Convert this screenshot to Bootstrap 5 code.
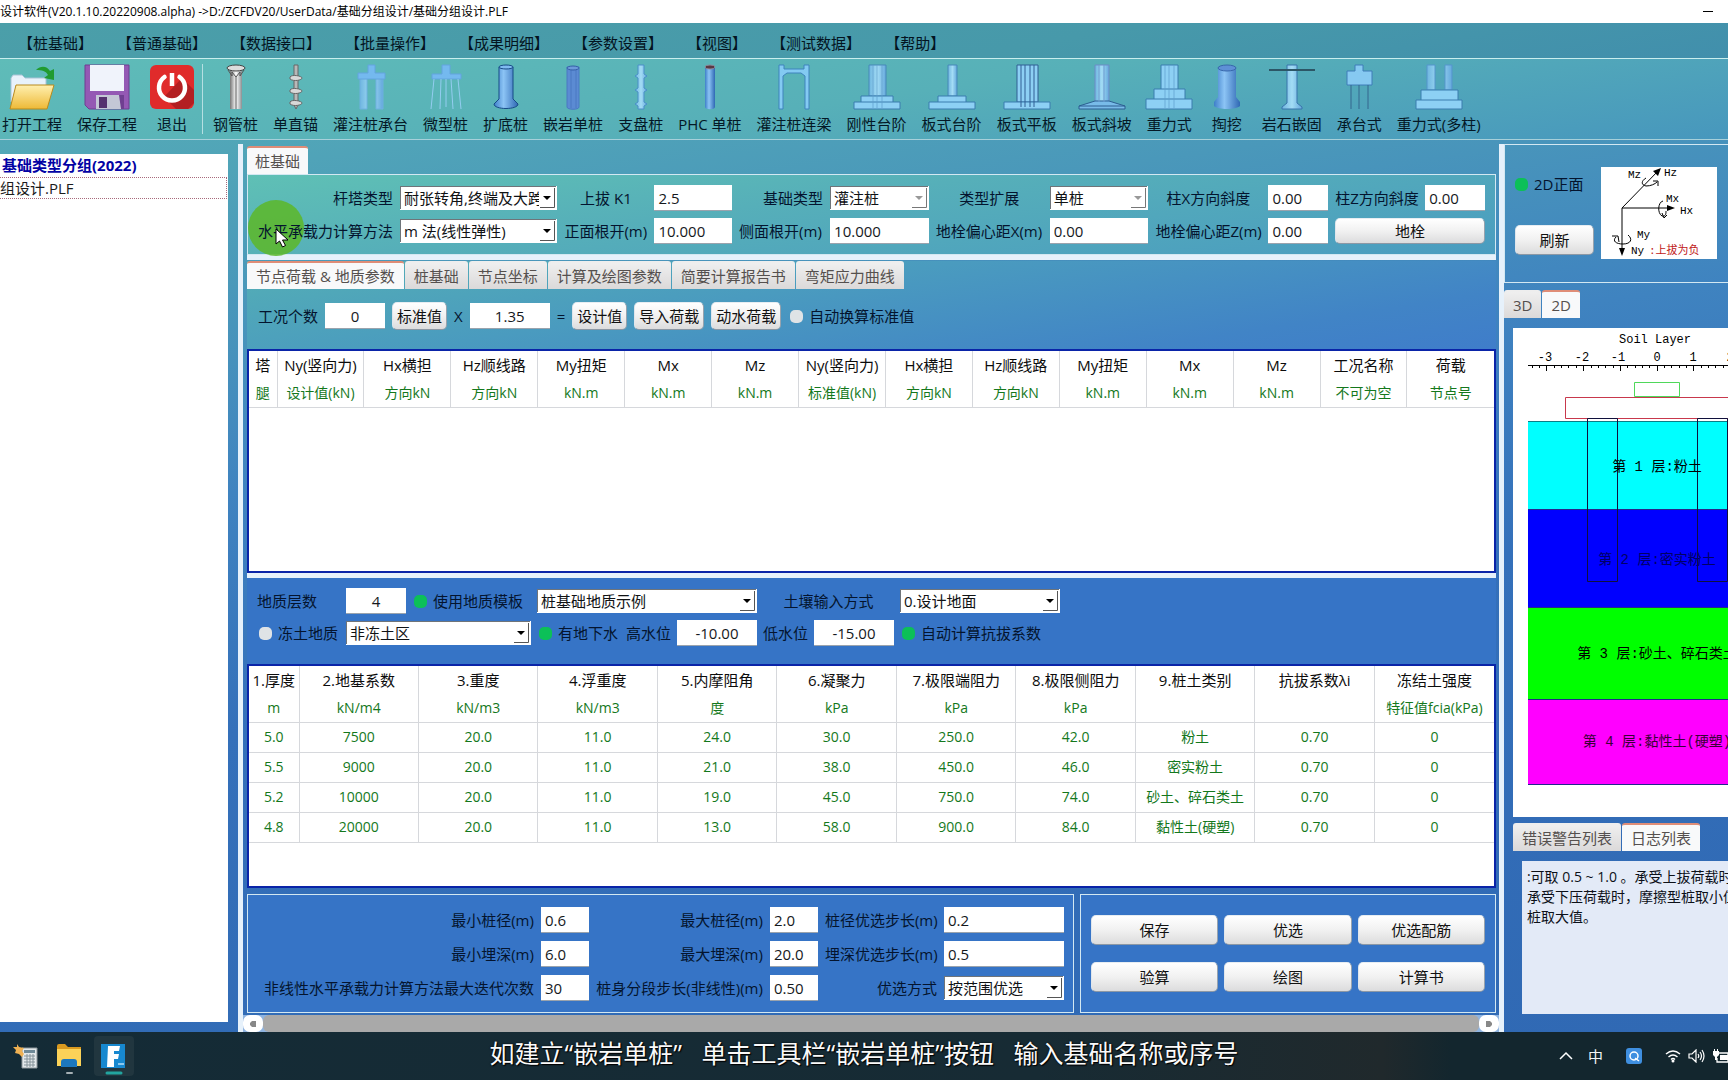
<!DOCTYPE html>
<html lang="zh-CN">
<head>
<meta charset="utf-8">
<meta name="viewport" content="width=device-width, initial-scale=1">
<title>基础分组设计</title>
<link href="https://cdn.jsdelivr.net/npm/bootstrap@5.3.0/dist/css/bootstrap.min.css" rel="stylesheet">
<style>
:root { --ink:#04142e; --line:#d3e8f2; --strip:#e6f1fb; --grid-green:#14781c; }
body { font-family:"Open Sans","Noto Sans CJK SC",sans-serif; font-size:15px; line-height:20px; color:var(--ink); height:100vh; overflow:hidden; }
label { white-space:nowrap; }
.app-title { height:23px; font-size:12px; line-height:23px; color:#000; background:#fff; white-space:nowrap; }
.app-title button { width:20px; height:22px; margin-right:10px; }
.app-menu { height:35px; gap:24px; padding:4px 0 0 18px; background:linear-gradient(170deg,#4b9fa9,#4799aa 60%,#418fac); }
.app-menu a { color:#03141f; text-decoration:none; white-space:nowrap; }
.app-tools { height:82px; padding:5px 0 0 2px; gap:15px; border-top:1px solid #c9eeee; border-bottom:1px solid #a7d0da; background:linear-gradient(172deg,#5fbcb8,#57b0b8 50%,#4797bd); }
.tool { min-width:40px; color:#041826; font-size:15px; line-height:20px; white-space:nowrap; }
.tool svg { width:48px; height:46px; margin:0 -4px 4px; flex:none; }
.tool-sep { width:1px; height:70px; background:#b5dfe2; margin:0 -5px; }
.work { background:linear-gradient(172deg,#53a9b7 0,#4a98ba 16%,#3f83c0 34%,#3470ba 55%,#3069b4 100%); }
.tree { width:238px; padding:14px 10px 10px 0; }
.tree ul { background:#fff; color:#1b1b1b; line-height:22px; }
.tree .root { color:#0202a4; font-weight:700; padding:0 0 1px 2px; }
.tree .leaf { border:1px dotted #a86a7c; border-left:0; margin-right:1px; height:22px; line-height:20px; }
.vsplit { width:5px; margin-top:4px; background:var(--strip); }
.hsplit { height:5px; background:var(--strip); }
.center-body { padding:6px 3px 2px 4px; }
.panel { border:1px solid var(--line); }
.pane-tabs { gap:1px; }
.pane-tabs button { border:0; border-top:2px solid #eee; padding:0 9px; color:#55504e; background:linear-gradient(#efefef,#dbd9d9); border-radius:3px 3px 0 0; height:28px; line-height:24px; white-space:nowrap; }
.pane-tabs button.active { background:#f8f9fa; border-top-color:#df8d77; }
.pane-tabs.flush button { padding:0 8px; }
.pane-tabs.log-tabs { padding-left:9px; }
.params { display:grid; grid-template-columns:135px minmax(0,158fr) 83px minmax(0,78fr) 84px minmax(0,99fr) 107px minmax(0,99fr) 106px minmax(0,60fr) 83px minmax(0,60fr); gap:7px; padding:10px; align-items:center; background:linear-gradient(173deg,#5fc0b5 0,#56afb9 40%,#4a9cc0 100%); }
.params label { position:relative; z-index:1; }
.txt { height:26px; border:0; border-radius:0; padding:0 4px; background:#fff; color:#15181c; width:100%; min-width:0; box-shadow:inset 0 -1px #9aa3ad; }
.sel { height:24px; width:100%; min-width:0; border:0; border-radius:0; padding:0 18px 0 4px; color:#101214; appearance:none; box-shadow:inset -1px -1px #fff, inset 1px 1px #6f7479;
 background:#fff url("data:image/svg+xml,%3Csvg xmlns='http://www.w3.org/2000/svg' width='17' height='22'%3E%3Cpath d='M1 20.5H15.500V1' fill='none' stroke='%23555'/%3E%3Cpath d='M4 9h8l-4 4z' fill='%23000'/%3E%3C/svg%3E") no-repeat right 1px top 1px; }
.sel:disabled { opacity:1; background-image:url("data:image/svg+xml,%3Csvg xmlns='http://www.w3.org/2000/svg' width='17' height='22'%3E%3Cpath d='M1 20.5H15.500V1' fill='none' stroke='%23777'/%3E%3Cpath d='M4 9h8l-4 4z' fill='%23999'/%3E%3C/svg%3E"); }
.w60{width:60px}.w80{width:80px}.w160{width:160px}.w185{width:185px}.w220{width:220px}
.keybtn { border:1px solid; border-color:#e7edf2 #98a3ae #8c98a5 #e0e6ec; border-radius:5px; background:linear-gradient(#fff,#f1f1f1 50%,#dcdcdd); color:#111; padding:0 3px; height:28px; line-height:24px; white-space:nowrap; }
.params .keybtn { grid-column:span 2; height:26px; line-height:22px; }
.chk { appearance:none; width:13px; height:13px; border-radius:5px; background:#dfe3e6; margin:0; flex:none; }
.chk:checked { background:#0cc058; }
.load-pane { padding:13px 0 19px 11px; gap:7px; }
.load-pane .keybtn { padding:0 4px; }
.load-pane .chk { margin:0 -1px 0 2px; }
.load-bg { margin-top:1px; background:linear-gradient(171deg,#54afb5 0,#4a9bbf 40%,#4184c6 80%,#3f7dca 100%); }
.sheet { border:2px solid #0a24a8; background:#fff; min-height:0; overflow:hidden; flex:1 1 222px; }
.sheet table { width:100%; table-layout:fixed; border-collapse:collapse; text-align:center; font-size:14px; color:var(--grid-green); }
.sheet th { font-weight:400; color:#0c0c0c; font-size:15px; height:29px; }
.sheet th, .sheet td { padding:0 0 1px; border-right:1px solid #d6d8dc; white-space:nowrap; overflow:hidden; }
.sheet th:last-child, .sheet td:last-child { border-right:0; }
.sheet thead td { height:27px; border-bottom:1px solid #d6d8dc; }
.sheet tbody td { height:30px; border-bottom:1px solid #d6d8dc; }
.col-leg { width:28px; }
.col-thick { width:50px; }
.geo { padding:10px 0 18px 10px; gap:6px; }
.geo .chk { margin:0 6px 0 8px; }
.geo .chk.first { margin:0 6px 0 2px; }
.lower { background:#3674c6; }
.opts-row { gap:6px; margin-top:6px; }
.opt { display:grid; grid-template-columns:minmax(0,1fr) 48px 167px 48px 112px 120px; column-gap:7px; row-gap:8px; align-items:center; text-align:right; padding:12px 9px 11px 4px; }
.acts { width:416px; display:grid; grid-template-columns:repeat(3,1fr); column-gap:6px; row-gap:16px; padding:20px 10px; }
.acts .keybtn { height:30px; line-height:26px; }
.hbar { height:17px; background:#8fb4e0; }
.hbar button { width:20px; border:0; background:#fff; border-radius:7px; line-height:17px; }
.hbar .thumb { background:#a9a9a9; border-radius:6px; }
.side { width:224px; overflow:hidden; }
.side-top { border:1px solid var(--line); border-width:1px 0 1px 1px; height:139px; margin-top:4px; gap:7px; padding:21px 0 0 10px; }
.side-top .keybtn { width:79px; height:30px; line-height:26px; }
.side-top svg { flex:none; margin-top:1px; background:#fff; }
.view-tabs { margin-top:7px; }
.soil { margin:10px 0 6px 9px; background:#fff; }
.log { background:#e3eaf7; border:0; resize:none; overflow:hidden; font-size:14px; line-height:20px; color:#0c1018; padding:6px 5px; height:153px; width:300px; white-space:pre; margin:10px 0 0 18px; }
.dock { height:48px; background:linear-gradient(90deg,#142b36,#172b34 60%,#20292c 80%,#13262e 84%,#13262e); color:#f4f6f7; }
.dock .app { width:40px; height:40px; flex:none; background:none; }
.dock .app.on { background:#21363f; border-radius:4px; }
.tray { gap:7px; }
.caption { left:0; right:0; top:0; text-align:center; font-size:25px; line-height:42px; white-space:pre; color:#fafafa; text-shadow:0 0 2px #000, 1px 1px 1px #000; }
.hot { left:0; top:25px; width:56px; height:56px; border-radius:50%; background:#5cb72c; opacity:.88; }
.ptr { left:27px; top:53px; z-index:3; }
</style>
</head>
<body class="d-flex flex-column">
<svg width="0" height="0" class="position-absolute" aria-hidden="true">
 <defs>
  <linearGradient id="gb"><stop offset="0" stop-color="#3e7fc9"/><stop offset=".4" stop-color="#8cc4f5"/><stop offset="1" stop-color="#2f68b4"/></linearGradient>
  <linearGradient id="gl"><stop offset="0" stop-color="#6fb6e0"/><stop offset=".5" stop-color="#a3dcf5"/><stop offset="1" stop-color="#64a8dc"/></linearGradient>
  <linearGradient id="gg"><stop offset="0" stop-color="#777"/><stop offset=".5" stop-color="#fff"/><stop offset="1" stop-color="#8a8f92"/></linearGradient>
  <linearGradient id="gy" x2="0" y2="1"><stop offset="0" stop-color="#fff0b0"/><stop offset="1" stop-color="#eeb936"/></linearGradient>
 </defs>
</svg>

<header class="app-title d-flex justify-content-between">
 <span>设计软件(V20.1.10.20220908.alpha) -&gt;D:/ZCFDV20/UserData/基础分组设计/基础分组设计.PLF</span>
 <button class="btn p-0 border-0 lh-1" aria-label="最小化"><svg width="10" height="3"><path d="M0 .5h10" stroke="#000"/></svg></button>
</header>

<nav class="app-menu d-flex align-items-center">
 <a href="#">【桩基础】</a><a href="#">【普通基础】</a><a href="#">【数据接口】</a><a href="#">【批量操作】</a><a href="#">【成果明细】</a><a href="#">【参数设置】</a><a href="#">【视图】</a><a href="#">【测试数据】</a><a href="#">【帮助】</a>
</nav>

<div class="app-tools d-flex" role="toolbar">
 <button class="btn p-0 border-0 tool d-flex flex-column align-items-center"><svg viewBox="0 0 48 46"><path d="M3 14l2-3h9l3 3h21v24H3z" fill="#e8f2fb" stroke="#a9c3d6"/><path d="M8 21h38l-7 24H2z" fill="url(#gy)" stroke="#b98a1d"/><path d="M28 6c5-5 11-4 14 1l4-2v11l-10-2 4-3c-2-4-6-5-12-5z" fill="#219b30"/></svg>打开工程</button>
 <button class="btn p-0 border-0 tool d-flex flex-column align-items-center"><svg viewBox="0 0 48 46"><path d="M2 1h44v44H6l-4-4z" fill="#9459b4" stroke="#6f3f91"/><path d="M7 1h34v26H7z" fill="#f0f3fb"/><path d="M13 31h25v14H13z" fill="#c4c7d6"/><path d="M16 33h8v11h-8z" fill="#55316f"/><path d="M36 31h5v14h-3z" fill="#6f3f91"/></svg>保存工程</button>
 <button class="btn p-0 border-0 tool d-flex flex-column align-items-center"><svg viewBox="0 0 48 46"><rect x="2" y="1" width="44" height="44" rx="6" fill="#e02b2b"/><path d="M34 14l12 12v13l-6 6H28L16 33z" fill="#b31f22"/><path d="M16.500 13a13 13 0 1 0 15 0" fill="none" stroke="#fff" stroke-width="4.500" stroke-linecap="round"/><path d="M24 9v13" stroke="#fff" stroke-width="4.500"/></svg>退出</button>
 <span class="tool-sep"></span>
 <button class="btn p-0 border-0 tool d-flex flex-column align-items-center"><svg viewBox="0 0 48 46"><path d="M18 6h12v39H18z" fill="url(#gg)"/><ellipse cx="24" cy="4" rx="9" ry="3" fill="#ddd" stroke="#444"/><path d="M16 6l4 6v-4l4 5 4-5v4l4-6M24 13v32" fill="none" stroke="#555"/></svg>钢管桩</button>
 <button class="btn p-0 border-0 tool d-flex flex-column align-items-center"><svg viewBox="0 0 48 46"><path d="M22 1h4v40l-2 4-2-4z" fill="#b8b8b8" stroke="#666"/><path d="M18 13c2-3 12-1 12 1s-8 4-12 1zM18 26c2-3 12-1 12 1s-8 4-12 1zM18 38c2-3 12-1 12 1s-8 4-12 1z" fill="#d8d8d8" stroke="#666"/></svg>单直锚</button>
 <button class="btn p-0 border-0 tool d-flex flex-column align-items-center"><svg viewBox="0 0 48 46"><path d="M13 14h7v31h-7zM29 14h7v31h-7z" fill="url(#gl)" stroke="#6fb0e0"/><path d="M21 1h7v8h10v6H11V9h10z" fill="#74b9ef" stroke="#62a4de"/></svg>灌注桩承台</button>
 <button class="btn p-0 border-0 tool d-flex flex-column align-items-center"><svg viewBox="0 0 48 46"><path d="M20 1h8v9h11v5H10v-5h10z" fill="#74b9ef" stroke="#62a4de"/><path d="M12 15L9 45M19 15l-1 30M24 15v28M29 15l2 30M36 15l3 30" stroke="#93cdf0"/></svg>微型桩</button>
 <button class="btn p-0 border-0 tool d-flex flex-column align-items-center"><svg viewBox="0 0 48 46"><path d="M17 3h14v32l5 5c0 6-24 6-24 0l5-5z" fill="url(#gb)" stroke="#174a86"/><ellipse cx="24" cy="3" rx="7" ry="2" fill="#7fbaf0" stroke="#174a86"/></svg>扩底桩</button>
 <button class="btn p-0 border-0 tool d-flex flex-column align-items-center"><svg viewBox="0 0 48 46"><path d="M18 3h12v40c0 3-12 3-12 0z" fill="#5b8bd3" stroke="#4a78c2"/><path d="M22 5v39M27 5v39" stroke="#4a78c2"/><ellipse cx="24" cy="4" rx="6" ry="2" fill="#6c9ada" stroke="#345fa6"/></svg>嵌岩单桩</button>
 <button class="btn p-0 border-0 tool d-flex flex-column align-items-center"><svg viewBox="0 0 48 46"><path d="M21 1h6v9l3 2-3 2v10l3 2-3 2v10l3 2-3 2v3h-6v-3l-3-2 3-2V28l-3-2 3-2V14l-3-2 3-2z" fill="url(#gl)" stroke="#4a8fc8"/></svg>支盘桩</button>
 <button class="btn p-0 border-0 tool d-flex flex-column align-items-center"><svg viewBox="0 0 48 46"><path d="M19 3h10v40c0 3-10 3-10 0z" fill="url(#gb)"/><ellipse cx="24" cy="3" rx="5" ry="2" fill="#5a3844" stroke="#8a8a9a"/></svg>PHC 单桩</button>
 <button class="btn p-0 border-0 tool d-flex flex-column align-items-center"><svg viewBox="0 0 48 46"><path d="M9 1h5v4h20V1h5v44h-4V12l-4-3H17l-4 3v33H9z" fill="#83caf2" stroke="#3f83bd"/></svg>灌注桩连梁</button>
 <button class="btn p-0 border-0 tool d-flex flex-column align-items-center"><svg viewBox="0 0 48 46"><path d="M16 1h17v31H16z" fill="url(#gl)" stroke="#4788b8"/><path d="M8 32h32v6h7v7H1v-7h7zM8 38h32" fill="#8dd0f4" stroke="#3a7cae"/><path d="M20 1v43M24 1v43M29 1v43" stroke="#5f9fcb" stroke-width=".7"/></svg>刚性台阶</button>
 <button class="btn p-0 border-0 tool d-flex flex-column align-items-center"><svg viewBox="0 0 48 46"><path d="M20 1h9v31h-9z" fill="url(#gl)" stroke="#4788b8"/><path d="M10 32h28v6h9v7H1v-7h9zM10 38h28" fill="#8dd0f4" stroke="#3a7cae"/></svg>板式台阶</button>
 <button class="btn p-0 border-0 tool d-flex flex-column align-items-center"><svg viewBox="0 0 48 46"><path d="M14 1h21v37H14z" fill="#8dd0f4" stroke="#315f94"/><path d="M1 38h46v7H1z" fill="#8dd0f4" stroke="#3a7cae"/><path d="M18 1v42M22 1v42M27 1v42M31 1v42" stroke="#315f94"/></svg>板式平板</button>
 <button class="btn p-0 border-0 tool d-flex flex-column align-items-center"><svg viewBox="0 0 48 46"><path d="M17 1h14v37H17z" fill="url(#gl)" stroke="#6c8cc6"/><path d="M17 37h14l16 5v3H1v-3zM1 42h46" fill="#78bbe8" stroke="#2c5f91"/><path d="M21 1v37M26 1v37" stroke="#6c9bcf"/></svg>板式斜坡</button>
 <button class="btn p-0 border-0 tool d-flex flex-column align-items-center"><svg viewBox="0 0 48 46"><path d="M16 1h17v24h7v10h7v10H1V35h8V25h7zM9 35h31M16 25h17" fill="#8dd0f4" stroke="#3a7cae"/><path d="M20 1v43M24 1v43M29 1v43" stroke="#5f9fcb" stroke-width=".7"/></svg>重力式</button>
 <button class="btn p-0 border-0 tool d-flex flex-column align-items-center"><svg viewBox="0 0 48 46"><path d="M15 4h18v29l4 5v4c-4 4-22 4-26 0v-4l4-5z" fill="url(#gb)"/><ellipse cx="24" cy="4" rx="9" ry="3" fill="#5e90d6" stroke="#3767ab"/></svg>掏挖</button>
 <button class="btn p-0 border-0 tool d-flex flex-column align-items-center"><svg viewBox="0 0 48 46"><path d="M19 1h10v38l5 4v2H14v-2l5-4z" fill="url(#gl)" stroke="#3974ab"/><path d="M1 6h46" stroke="#2c5666" stroke-width="2"/></svg>岩石嵌固</button>
 <button class="btn p-0 border-0 tool d-flex flex-column align-items-center"><svg viewBox="0 0 48 46"><path d="M20 1h8v6h9v14H12V7h8z" fill="#86c9f1" stroke="#3f7cb8"/><path d="M16 21v24M24 21v24M33 21v24" stroke="#34678e"/></svg>承台式</button>
 <button class="btn p-0 border-0 tool d-flex flex-column align-items-center"><svg viewBox="0 0 48 46"><path d="M12 1h8v25h-8zM30 1h7v25h-7z" fill="url(#gl)" stroke="#5595cc"/><path d="M6 26h37v10h4v9H1v-9h5zM6 36h37" fill="#8dd0f4" stroke="#3a7cae"/></svg>重力式(多柱)</button>
</div>

<main class="work d-flex flex-grow-1 overflow-hidden">
 <aside class="tree d-flex flex-shrink-0">
  <ul class="list-unstyled m-0 flex-grow-1"><li class="root">基础类型分组(2022)</li><li class="leaf">组设计.PLF</li></ul>
 </aside>
 <div class="vsplit flex-shrink-0"></div>

 <section class="d-flex flex-column flex-grow-1 overflow-hidden">
  <div class="center-body d-flex flex-column flex-grow-1">
   <div class="pane-tabs flush d-flex"><button class="active">桩基础</button></div>
   <div class="params panel position-relative">
    <span class="hot position-absolute"></span>
    <svg class="ptr position-absolute" width="14" height="20" viewBox="0 0 14 20"><path d="M1 1v15l3.500-3 3 6 3-1.500-3-5.500H13z" fill="#fff" stroke="#000"/></svg>
    <label class="text-end" for="p1">杆塔类型</label><select class="sel" id="p1"><option>耐张转角,终端及大跨越</option></select>
    <label class="text-center" for="p2">上拔 K1</label><input class="txt" id="p2" value="2.5">
    <label class="text-end" for="p3">基础类型</label><select class="sel" id="p3" disabled><option>灌注桩</option></select>
    <label class="text-center" for="p4">类型扩展</label><select class="sel" id="p4" disabled><option>单桩</option></select>
    <label class="text-center" for="p5">柱X方向斜度</label><input class="txt" id="p5" value="0.00">
    <label for="p6">柱Z方向斜度</label><input class="txt" id="p6" value="0.00">
    <label class="text-end" for="p7">水平承载力计算方法</label><select class="sel" id="p7"><option>m 法(线性弹性)</option></select>
    <label for="p8">正面根开(m)</label><input class="txt" id="p8" value="10.000">
    <label for="p9">侧面根开(m)</label><input class="txt" id="p9" value="10.000">
    <label for="p10">地栓偏心距X(m)</label><input class="txt" id="p10" value="0.00">
    <label for="p11">地栓偏心距Z(m)</label><input class="txt" id="p11" value="0.00">
    <button class="keybtn">地栓</button>
   </div>
   <div class="hsplit"></div>

   <div class="load-bg">
    <div class="pane-tabs d-flex"><button class="active">节点荷载 &amp; 地质参数</button><button>桩基础</button><button>节点坐标</button><button>计算及绘图参数</button><button>简要计算报告书</button><button>弯矩应力曲线</button></div>
    <div class="load-pane d-flex align-items-center">
     <label for="n1">工况个数</label><input class="txt w60 text-center" id="n1" value="0">
     <button class="keybtn">标准值</button><span>X</span><input class="txt w80 text-center" aria-label="分项系数" value="1.35"><span>=</span>
     <button class="keybtn">设计值</button><button class="keybtn">导入荷载</button><button class="keybtn">动水荷载</button>
     <input class="chk" type="checkbox" id="c1"><label for="c1">自动换算标准值</label>
    </div>
   </div>

   <div class="sheet">
    <table>
     <colgroup><col class="col-leg"><col span="14"></colgroup>
     <thead>
      <tr><th>塔</th><th>Ny(竖向力)</th><th>Hx横担</th><th>Hz顺线路</th><th>My扭矩</th><th>Mx</th><th>Mz</th><th>Ny(竖向力)</th><th>Hx横担</th><th>Hz顺线路</th><th>My扭矩</th><th>Mx</th><th>Mz</th><th>工况名称</th><th>荷载</th></tr>
      <tr><td>腿</td><td>设计值(kN)</td><td>方向kN</td><td>方向kN</td><td>kN.m</td><td>kN.m</td><td>kN.m</td><td>标准值(kN)</td><td>方向kN</td><td>方向kN</td><td>kN.m</td><td>kN.m</td><td>kN.m</td><td>不可为空</td><td>节点号</td></tr>
     </thead>
    </table>
   </div>
   <div class="hsplit"></div>

   <div class="lower geo d-flex flex-column">
    <div class="d-flex align-items-center">
     <label for="g1" style="width:89px">地质层数</label><input class="txt w60 text-center" id="g1" value="4">
     <input class="chk" type="checkbox" id="g2" checked><label for="g2" style="width:104px">使用地质模板</label>
     <select class="sel w220" aria-label="地质模板"><option>桩基础地质示例</option></select>
     <label for="g3" class="text-center" style="width:143px">土壤输入方式</label><select class="sel w160" id="g3"><option>0.设计地面</option></select>
    </div>
    <div class="d-flex align-items-center">
     <input class="chk first" type="checkbox" id="g4"><label for="g4" style="width:68px">冻土地质</label>
     <select class="sel w185" aria-label="冻土分区"><option>非冻土区</option></select>
     <input class="chk" type="checkbox" id="g5" checked><label for="g5" style="width:68px">有地下水</label>
     <label for="g6" style="width:51px">高水位</label><input class="txt w80 text-center" id="g6" value="-10.00">
     <label for="g7" class="text-center" style="width:57px">低水位</label><input class="txt w80 text-center" id="g7" value="-15.00">
     <input class="chk" type="checkbox" id="g8" checked><label for="g8">自动计算抗拔系数</label>
    </div>
   </div>

   <div class="sheet">
    <table>
     <colgroup><col class="col-thick"><col span="10"></colgroup>
     <thead>
      <tr><th>1.厚度</th><th>2.地基系数</th><th>3.重度</th><th>4.浮重度</th><th>5.内摩阻角</th><th>6.凝聚力</th><th>7.极限端阻力</th><th>8.极限侧阻力</th><th>9.桩土类别</th><th>抗拔系数λi</th><th>冻结土强度</th></tr>
      <tr><td>m</td><td>kN/m4</td><td>kN/m3</td><td>kN/m3</td><td>度</td><td>kPa</td><td>kPa</td><td>kPa</td><td></td><td></td><td>特征值fcia(kPa)</td></tr>
     </thead>
     <tbody>
      <tr><td>5.0</td><td>7500</td><td>20.0</td><td>11.0</td><td>24.0</td><td>30.0</td><td>250.0</td><td>42.0</td><td>粉土</td><td>0.70</td><td>0</td></tr>
      <tr><td>5.5</td><td>9000</td><td>20.0</td><td>11.0</td><td>21.0</td><td>38.0</td><td>450.0</td><td>46.0</td><td>密实粉土</td><td>0.70</td><td>0</td></tr>
      <tr><td>5.2</td><td>10000</td><td>20.0</td><td>11.0</td><td>19.0</td><td>45.0</td><td>750.0</td><td>74.0</td><td>砂土、碎石类土</td><td>0.70</td><td>0</td></tr>
      <tr><td>4.8</td><td>20000</td><td>20.0</td><td>11.0</td><td>13.0</td><td>58.0</td><td>900.0</td><td>84.0</td><td>黏性土(硬塑)</td><td>0.70</td><td>0</td></tr>
     </tbody>
    </table>
   </div>

   <div class="opts-row d-flex">
    <div class="panel lower opt flex-grow-1">
     <label for="o1">最小桩径(m)</label><input class="txt" id="o1" value="0.6"><label for="o2">最大桩径(m)</label><input class="txt" id="o2" value="2.0"><label for="o3">桩径优选步长(m)</label><input class="txt" id="o3" value="0.2">
     <label for="o4">最小埋深(m)</label><input class="txt" id="o4" value="6.0"><label for="o5">最大埋深(m)</label><input class="txt" id="o5" value="20.0"><label for="o6">埋深优选步长(m)</label><input class="txt" id="o6" value="0.5">
     <label for="o7">非线性水平承载力计算方法最大迭代次数</label><input class="txt" id="o7" value="30"><label for="o8">桩身分段步长(非线性)(m)</label><input class="txt" id="o8" value="0.50"><label for="o9">优选方式</label><select class="sel" id="o9"><option>按范围优选</option></select>
    </div>
    <div class="panel lower acts flex-shrink-0">
     <button class="keybtn">保存</button><button class="keybtn">优选</button><button class="keybtn">优选配筋</button>
     <button class="keybtn">验算</button><button class="keybtn">绘图</button><button class="keybtn">计算书</button>
    </div>
   </div>
  </div>
  <div class="hbar d-flex flex-shrink-0">
   <button class="p-0" aria-label="向左"><svg width="8" height="8" class="d-block mx-auto"><path d="M7 1v6H3L1 5V3l2-2z" fill="#888"/></svg></button>
   <div class="thumb flex-grow-1"></div>
   <button class="p-0" aria-label="向右"><svg width="8" height="8" class="d-block mx-auto"><path d="M1 1v6h4l2-2V3L5 1z" fill="#888"/></svg></button>
  </div>
 </section>

 <div class="vsplit flex-shrink-0"></div>
 <aside class="side flex-shrink-0">
  <div class="side-top d-flex">
   <div class="d-flex flex-column justify-content-between" style="height:89px">
    <div class="d-flex align-items-center pt-2" style="gap:6px"><input class="chk" type="checkbox" id="s1" checked><label for="s1">2D正面</label></div>
    <button class="keybtn">刷新</button>
   </div>
   <svg width="116" height="92" viewBox="0 0 116 92" font-family="'Liberation Mono','Noto Sans CJK SC',monospace" font-size="11">
    <path d="M21 41L58 3M21 41h48M21 41v42" fill="none" stroke="#000"/>
    <path d="M60 1l-3 8-5-5zM74 41l-8-3v6zM21 89l-3-8h6z"/>
    <path d="M45 11c-5 3-5 7 0 8 5 0 9-2 11-4M52 14h5v5M62 34c-5 1-6 12-1 15 4 1 4-3 4-5M61 46l2 5 3-3M15 70c-4 4 0 7 7 7 8 0 10-5 5-9M11 69h6l1 6" fill="none" stroke="#000"/>
    <text x="27" y="11">Mz</text><text x="63" y="9">Hz</text><text x="65" y="35">Mx</text><text x="79" y="47">Hx</text><text x="36" y="71">My</text><text x="30" y="87">Ny</text>
    <text x="48" y="87" fill="#c01818">:上拔为负</text>
   </svg>
  </div>
  <div class="pane-tabs view-tabs d-flex"><button>3D</button><button class="active">2D</button></div>
  <svg class="soil d-block" width="300" height="489" viewBox="0 0 300 489" font-family="'Liberation Mono','Noto Sans CJK SC',monospace" font-size="14" text-anchor="middle">
   <path d="M15 93.500h270v88H15z" fill="#00ffff"/><path d="M15 182h270v97H15z" fill="#0000ff"/><path d="M15 279h270v92H15z" fill="#00ff00"/><path d="M15 371h270v85H15z" fill="#ff00ff"/>
   <path d="M15 93.500h270" stroke="#0b7d86"/><path d="M15 181.500h270M15 279.500h270M15 371.500h270M15 456.500h270" stroke="#23278c"/>
   <path d="M15 37.500h270" stroke="#000"/>
   <path d="M19.500 37v3M26.500 37v3M33.500 37v6M41.500 37v3M48.500 37v3M55.500 37v3M63.500 37v3M70.500 37v6M78.500 37v3M85.500 37v3M92.500 37v3M100.500 37v3M107.500 37v6M114.500 37v3M122.500 37v3M129.500 37v3M136.500 37v3M144.500 37v6M151.500 37v3M158.500 37v3M166.500 37v3M173.500 37v3M180.500 37v6M188.500 37v3M195.500 37v3M202.500 37v3M210.500 37v3M217.500 37v6" stroke="#000"/>
   <g font-size="12"><text x="142" y="15">Soil Layer</text><text x="32" y="33">-3</text><text x="69" y="33">-2</text><text x="105" y="33">-1</text><text x="144" y="33">0</text><text x="180" y="33">1</text><text x="217" y="33">2</text></g>
   <path d="M121.500 54.500h45v14h-45z" fill="none" stroke="#4fd85a"/><path d="M52.500 69.500h184v21h-184z" fill="#fff" stroke="#c8384c"/>
   <path d="M74.500 90.500h30v163h-30zM184.500 90.500h30v163h-30z" fill="none" stroke="#10103c"/>
   <text x="144" y="143">第 1 层:粉土</text><text x="144" y="236" fill="#000066">第 2 层:密实粉土</text><text x="144" y="330">第 3 层:砂土、碎石类土</text><text x="144" y="418" fill="#3a0038">第 4 层:黏性土(硬塑)</text>
  </svg>
  <div class="pane-tabs log-tabs d-flex"><button>错误警告列表</button><button class="active">日志列表</button></div>
  <textarea class="log d-block" aria-label="日志">:可取 0.5 ~ 1.0 。承受上拔荷载时取小值，
承受下压荷载时，摩擦型桩取小值，端承型
桩取大值。</textarea>
 </aside>
</main>

<footer class="dock d-flex align-items-center position-relative flex-shrink-0">
 <div class="d-flex" style="gap:4px;padding-left:6px">
  <button class="btn app p-0 border-0" aria-label="计算器"><svg width="40" height="40" viewBox="0 0 40 40"><path d="M16 12h15v20H16z" fill="#e3e8ea" stroke="#8d979b"/><path d="M18 14h11v3H18z" fill="#6f8a98"/><path d="M18 20h11M18 23h11M18 26h11M18 29h11M21 18v13M24 18v13M27 18v13" stroke="#85939a"/><path d="M11 8l2 3 5 1-2 3 2 3-2 3-3-3-4-1 1-3-3-3 4 0z" fill="#efb153"/></svg></button>
  <button class="btn app p-0 border-0" aria-label="文件夹"><svg width="40" height="40" viewBox="0 0 40 40"><path d="M7 10q0-2 2-2h6l3 3h13v18H7z" fill="#d99a20"/><path d="M7 13h24v17H7z" fill="#fbd258"/><path d="M11 31v-5q0-3 3-3h10q3 0 3 3v5z" fill="#1c77bd"/><path d="M17 37h5" stroke="#a6b0b4" stroke-width="2" stroke-linecap="round"/></svg></button>
  <button class="btn app on p-0 border-0" aria-label="设计软件"><svg width="40" height="40" viewBox="0 0 40 40"><path d="M7 8h24v24H7z" fill="#1788cf"/><path d="M14 10h12l-1 5h-5v3h5l-1 5h-4v8h-7z" fill="#fff"/><path d="M24 28h6" stroke="#8cc8ee" stroke-width="2"/><path d="M13 37h14" stroke="#22a5a0" stroke-width="3" stroke-linecap="round"/></svg></button>
 </div>
 <div class="caption position-absolute">如建立“嵌岩单桩”   单击工具栏“嵌岩单桩”按钮   输入基础名称或序号</div>
 <div class="tray ms-auto d-flex align-items-center">
  <svg width="14" height="10" fill="none" stroke="#fff" stroke-width="1.500"><path d="M1 8l6-6 6 6"/></svg>
  <span class="ps-2 pe-3">中</span>
  <svg width="16" height="16"><rect width="16" height="16" rx="3" fill="#3f8fe0"/><circle cx="8" cy="8" r="4" fill="none" stroke="#fff" stroke-width="1.500"/><path d="M9 10l4 3" stroke="#fff" stroke-width="1.500"/></svg>
  <svg width="16" height="14" class="ms-3" fill="none" stroke="#fff" stroke-width="1.400"><path d="M1 5q7-6 14 0M3.500 8q4.500-4 9 0M6 10.500q2-2 4 0"/><circle cx="8" cy="12" r=".8" fill="#fff"/></svg>
  <svg width="18" height="14" fill="none" stroke="#fff" stroke-width="1.200"><path d="M1 5h3l4-4v12L4 9H1zM10 5q1.500 2 0 4M12 3q3 4 0 8M14 1q4 6 0 12"/></svg>
  <svg width="15" height="16"><path d="M5 5h10v9H4v-4" fill="none" stroke="#fff" stroke-width="1.300"/><path d="M7 7h8v5H7zM0 3h6v4l-2 2v3H2V9L0 7zM1 1h1v2H1zM4 1h1v2H4z" fill="#fff"/></svg>
 </div>
</footer>
<script src="https://cdn.jsdelivr.net/npm/bootstrap@5.3.0/dist/js/bootstrap.bundle.min.js"></script>
</body>
</html>
